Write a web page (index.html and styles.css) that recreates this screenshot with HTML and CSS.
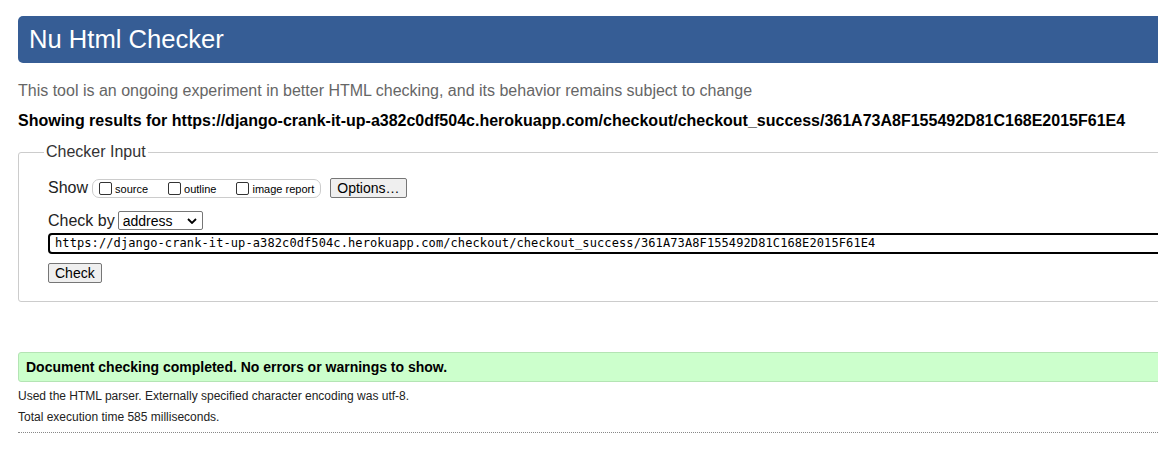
FILE: index.html
```html
<!DOCTYPE html>
<html>
<head>
<meta charset="utf-8">
<title>Nu Html Checker</title>
<link rel="stylesheet" href="styles.css">
</head>
<body>
<div class="page">
  <h1 class="banner">Nu Html Checker</h1>
  <p class="intro">This tool is an ongoing experiment in better HTML checking, and its behavior remains subject to change</p>
  <p class="showing">Showing results for https://django-crank-it-up-a382c0df504c.herokuapp.com/checkout/checkout_success/361A73A8F155492D81C168E2015F61E4</p>
  <fieldset class="checker">
    <legend class="checker-legend">Checker Input</legend>
    <div class="row show-row">
      <span class="lbl">Show</span>
      <span class="opts">
        <label class="opt"><input type="checkbox" class="cb"><span>source</span></label>
        <label class="opt"><input type="checkbox" class="cb"><span>outline</span></label>
        <label class="opt"><input type="checkbox" class="cb"><span>image report</span></label>
      </span>
      <button class="btn">Options…</button>
    </div>
    <div class="row by-row">
      <span class="lbl">Check by</span>
      <span class="sel"><span>address</span><svg class="chev" viewBox="0 0 10 6" width="10" height="6"><path d="M1 1 L5 5 L9 1" fill="none" stroke="#000" stroke-width="1.8"/></svg></span>
    </div>
    <div class="url">https://django-crank-it-up-a382c0df504c.herokuapp.com/checkout/checkout_success/361A73A8F155492D81C168E2015F61E4</div>
    <div class="row check-row"><button class="btn">Check</button></div>
  </fieldset>
  <p class="success">Document checking completed. No errors or warnings to show.</p>
  <p class="small">Used the HTML parser. Externally specified character encoding was utf-8.</p>
  <p class="small">Total execution time 585 milliseconds.</p>
  <div class="dots"></div>
</div>
</body>
</html>
```
FILE: styles.css
```css
html, body {
  margin: 0;
  padding: 0;
  overflow: hidden;
  background: #fff;
}
body {
  font-family: "Liberation Sans", Arial, sans-serif;
  color: #000;
}
.page {
  width: 1300px;
  padding: 16px 0 0 18px;
}
.banner {
  margin: 0;
  height: 47px;
  background: #365d95;
  color: #fff;
  font-weight: normal;
  font-size: 25.6px;
  line-height: 47px;
  padding-left: 11px;
  border-radius: 5px;
}
.intro {
  margin: 19px 0 0;
  font-size: 16px;
  line-height: 18px;
  color: #666;
}
.showing {
  margin: 12px 0 0;
  font-size: 16px;
  line-height: 18px;
  font-weight: bold;
}
.checker {
  margin: 13px 0 0;
  border: 1px solid #ccc;
  border-radius: 3px;
  padding: 17px 0 18px 29px;
}
.checker-legend {
  font-size: 16px;
  margin-left: -4px;
  padding: 0 2px;
  color: #333;
}
.row {
  display: flex;
  align-items: center;
}
.show-row {
  height: 20px;
}
.lbl {
  font-size: 16px;
  color: #222;
}
.opts {
  display: flex;
  align-items: center;
  margin-left: 4px;
  height: 17px;
  border: 1px solid #ccc;
  border-radius: 7px;
  padding: 0 6px 0 6px;
}
.opt {
  display: flex;
  align-items: center;
  font-size: 11px;
  margin-right: 20px;
}
.opt span {
  position: relative;
  top: 1px;
}
.opt:last-child { margin-right: 0; }
.cb {
  width: 13px;
  height: 13px;
  margin: 0 3px 0 0;
  -webkit-appearance: none;
  appearance: none;
  border: 1px solid #333;
  border-radius: 2px;
  background: #fff;
}
.btn {
  font-family: "Liberation Sans", Arial, sans-serif;
  font-size: 14px;
  height: 20px;
  padding: 0 6px;
  background: #efefef;
  border: 1px solid #767676;
  border-radius: 2px;
  color: #000;
  margin-left: 9px;
}
.by-row {
  margin-top: 13px;
}
.sel {
  display: inline-flex;
  align-items: center;
  justify-content: space-between;
  margin-left: 3px;
  width: 85px;
  height: 19px;
  border: 1px solid #767676;
  border-radius: 2px;
  font-size: 14px;
  padding: 0 5px 0 4px;
  box-sizing: border-box;
}
.url {
  margin-top: 3px;
  height: 21px;
  box-sizing: border-box;
  border: 2px solid #000;
  border-radius: 4px;
  font-family: "DejaVu Sans Mono", "Liberation Mono", monospace;
  font-size: 12px;
  letter-spacing: 0.1px;
  line-height: 17px;
  padding-left: 5px;
  white-space: nowrap;
}
.check-row {
  margin-top: 9px;
}
.check-row .btn {
  margin-left: 0;
}
.success {
  margin: 50px 0 0;
  height: 30px;
  box-sizing: border-box;
  background: #ccffcc;
  border: 1px solid #b4e4b4;
  border-radius: 3px;
  font-size: 14px;
  font-weight: bold;
  line-height: 28px;
  padding-left: 7px;
}
.small {
  font-size: 12px;
  line-height: 14px;
  margin: 7px 0 0;
  color: #222;
}
.dots {
  margin-top: 8px;
  border-top: 1px dotted #888;
}
```
